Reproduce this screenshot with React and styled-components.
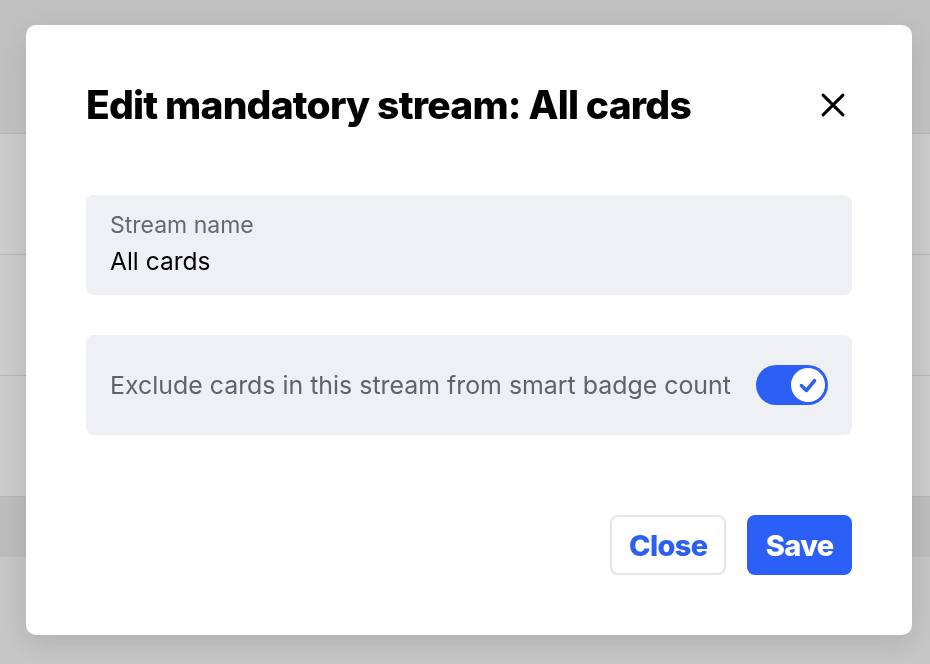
import React, { useState } from "react";
import styled, { createGlobalStyle } from "styled-components";

const GlobalStyle = createGlobalStyle`
  html, body {
    margin: 0;
    padding: 0;
    width: 930px;
    height: 664px;
    overflow: hidden;
    font-family: Inter, "Noto Sans", "Liberation Sans", sans-serif;
  }
  * { box-sizing: border-box; }
`;

const Page = styled.div`
  width: 930px;
  height: 664px;
  background: #f8f8f8;
  display: flex;
  flex-direction: column;
`;

const PageHeader = styled.div`
  height: 134px;
  background: #f2f2f2;
  border-bottom: 1px solid #e4e4e4;
`;

const PageRow = styled.div`
  height: 121px;
  background: #ffffff;
  border-bottom: 1px solid #e4e4e4;
`;

const PageFooter = styled.div`
  height: 60px;
  background: #ececec;
`;

const Overlay = styled.div`
  position: fixed;
  inset: 0;
  background: rgba(0, 0, 0, 0.2);
  display: flex;
  align-items: flex-start;
  padding: 25px 0 0 26px;
`;

const Modal = styled.div`
  width: 886px;
  height: 610px;
  background: #ffffff;
  border-radius: 10px;
  box-shadow: 0 8px 30px rgba(0, 0, 0, 0.12);
  padding: 60px;
  display: flex;
  flex-direction: column;
`;

const Header = styled.div`
  display: flex;
  align-items: center;
  justify-content: space-between;
  height: 40px;
  margin-bottom: 70px;
`;

const Title = styled.h2`
  margin: 0;
  font-size: 39px;
  font-weight: 800;
  letter-spacing: -0.8px;
  color: #000;
  line-height: 40px;
`;

const IconButton = styled.button`
  border: none;
  background: none;
  padding: 0;
  margin-right: 4px;
  width: 30px;
  height: 30px;
  display: flex;
  align-items: center;
  justify-content: center;
  cursor: pointer;
`;

const Field = styled.div`
  height: 100px;
  background: #eff0f4;
  border-radius: 8px;
  padding: 0 24px 4px;
  display: flex;
  flex-direction: column;
  justify-content: center;
  gap: 7px;
`;

const Label = styled.label`
  font-size: 23px;
  color: #656a70;
  line-height: 28px;
`;

const Value = styled.div`
  font-size: 24.5px;
  color: #000;
  line-height: 30px;
`;

const OptionRow = styled.div`
  height: 100px;
  margin-top: 40px;
  background: #eff0f4;
  border-radius: 8px;
  padding: 0 24px;
  display: flex;
  align-items: center;
  justify-content: space-between;
`;

const OptionText = styled.span`
  font-size: 24.9px;
  color: #5f646b;
`;

const Toggle = styled.button`
  width: 72px;
  height: 40px;
  border-radius: 20px;
  border: none;
  padding: 3px;
  background: ${(p) => (p.on ? "#2b5ff5" : "#c8cbd2")};
  display: flex;
  justify-content: ${(p) => (p.on ? "flex-end" : "flex-start")};
  align-items: center;
  cursor: pointer;
`;

const Knob = styled.span`
  width: 34px;
  height: 34px;
  border-radius: 50%;
  background: #fff;
  display: flex;
  align-items: center;
  justify-content: center;
`;

const Footer = styled.div`
  margin-top: auto;
  display: flex;
  justify-content: flex-end;
  gap: 21px;
`;

const Button = styled.button`
  height: 60px;
  padding: 0 ${(p) => (p.primary ? "16.5px" : "17px")};
  border-radius: 8px;
  font-family: Inter, "Noto Sans", sans-serif;
  font-size: 29px;
  font-weight: 800;
  letter-spacing: -0.7px;
  cursor: pointer;
  border: 2px solid ${(p) => (p.primary ? "#2b5ff5" : "#e5e5e5")};
  background: ${(p) => (p.primary ? "#2b5ff5" : "#fff")};
  color: ${(p) => (p.primary ? "#fff" : "#2b5ff5")};
`;

export default function App() {
  const [on, setOn] = useState(true);
  return (
    <>
      <GlobalStyle />
      <Page>
        <PageHeader />
        <PageRow />
        <PageRow />
        <PageRow />
        <PageFooter />
      </Page>
      <Overlay>
        <Modal>
          <Header>
            <Title>Edit mandatory stream: All cards</Title>
            <IconButton aria-label="Close">
              <svg width="28" height="28" viewBox="0 0 24 24" fill="none" stroke="#000" strokeWidth="2.6" strokeLinecap="round">
                <path d="M3.5 3.5 L20.5 20.5 M20.5 3.5 L3.5 20.5" />
              </svg>
            </IconButton>
          </Header>
          <Field>
            <Label>Stream name</Label>
            <Value>All cards</Value>
          </Field>
          <OptionRow>
            <OptionText>Exclude cards in this stream from smart badge count</OptionText>
            <Toggle on={on ? 1 : 0} onClick={() => setOn(!on)}>
              <Knob>
                {on && (
                  <svg width="22" height="22" viewBox="0 0 20 20" fill="none" stroke="#2b5ff5" strokeWidth="3.2" strokeLinecap="round" strokeLinejoin="round">
                    <path d="M4 10.5 L8.5 15 L16 6" />
                  </svg>
                )}
              </Knob>
            </Toggle>
          </OptionRow>
          <Footer>
            <Button>Close</Button>
            <Button primary>Save</Button>
          </Footer>
        </Modal>
      </Overlay>
    </>
  );
}
